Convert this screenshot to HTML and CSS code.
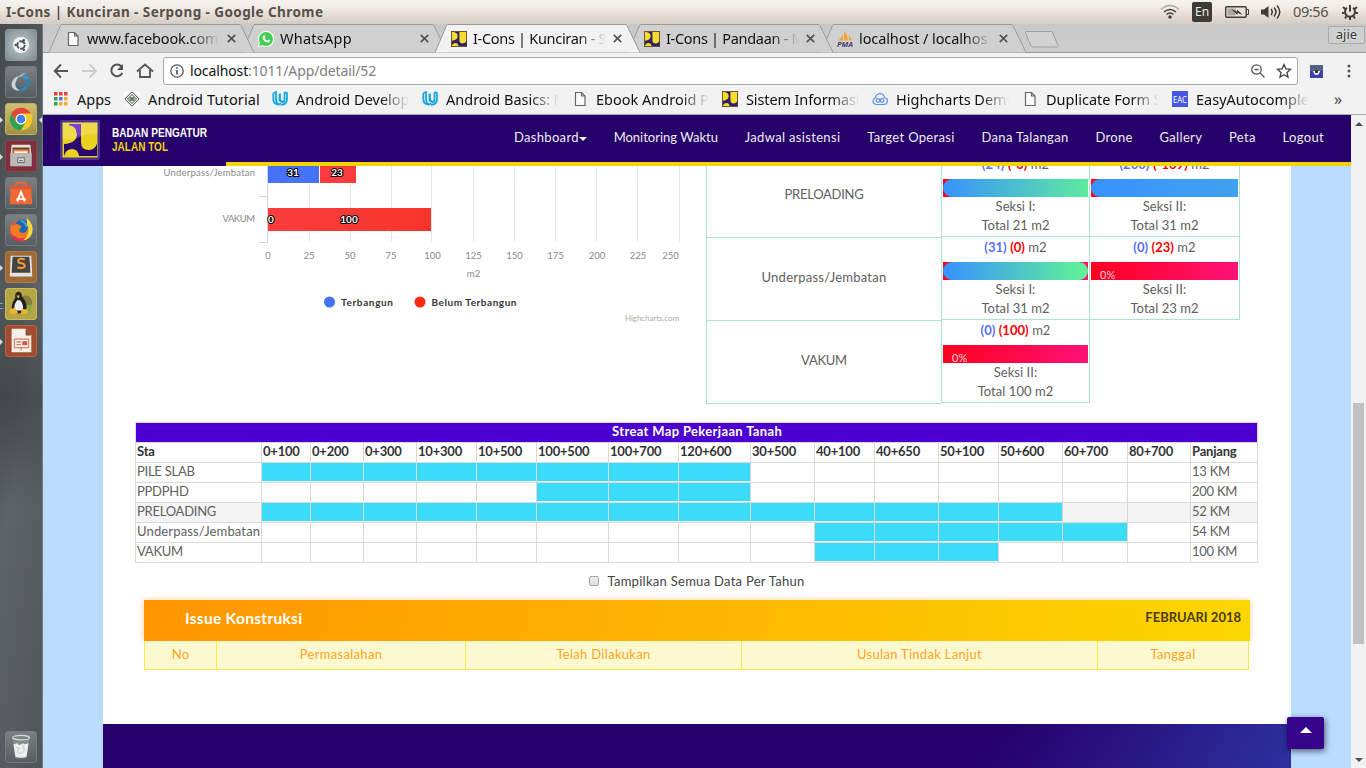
FILE: index.html
```html
<!DOCTYPE html>
<html lang="id">
<head>
<meta charset="utf-8">
<title>I-Cons | Kunciran - Serpong</title>
<link rel="stylesheet" href="styles.css">
</head>
<body>
<svg width="0" height="0" class="defs">
  <defs>
    <symbol id="tab" viewBox="0 0 207 29"><path d="M1 28.5 12.5 1.5Q13 .5 14 .5H191Q192.500 .5 193 1.500L206 28.500"/></symbol>
    <symbol id="pu" viewBox="2 2 36 36"><path d="M2 2h36v36H2z" fill="#5a4a30"/><path d="M4 4h32v32H4z" fill="#f8dc2c"/><path d="M9 4H21V22q0 8 7.500 8 6 0 8.500-6V36H19q-1-7-7-7t-8 7V24q13-1 13-10 0-8-8-9z" fill="#30206c"/></symbol>
    <symbol id="file" viewBox="0 0 16 16"><path d="M3.500 1.500h6l3.500 3.500v9.500H3.500zM9.500 1.500V5H13" fill="#fafafa" stroke="#666" stroke-width="1.200"/></symbol>
    <symbol id="close" viewBox="0 0 8 8"><path d="M.7.7 7.300 7.300M7.300.7.7 7.300" stroke="#555" stroke-width="1.500"/></symbol>
    <symbol id="udacity" viewBox="0 0 16 16"><path d="M1.300 2.200 4 1v7q0 4 3 5.500M1.300 2.200V8q0 5.500 5.700 5.500 1.500 0 1.500-1.500M8 2.500v5q0 3 2.500 3M12.500 1.200 15 2.200V8q0 5.500-6 5.800M12.500 1.200V9q0 2-2 2Q7 11 7.500 7V3" fill="none" stroke="#19a7e0" stroke-width="1.800"/></symbol>
  </defs>
</svg>
<header class="panel">
  <span class="panel-title">I-Cons | Kunciran - Serpong - Google Chrome</span>
  <svg class="panel-wifi" width="20" height="16" viewBox="0 0 20 16" fill="none" stroke="#3f3c38" stroke-width="1.500"><path d="M1 5.500q9-8 18 0" stroke="#aaa6a0"/><path d="M4 8q6-5 12 0M6.500 10.500q3.500-3 7 0"/><circle cx="10" cy="13" r="1" fill="#3f3c38"/></svg>
  <span class="panel-lang">En</span>
  <svg class="panel-bat" width="24" height="12" viewBox="0 0 24 12"><rect x=".7" y=".7" width="20.500" height="10.500" rx="1" fill="#e8e2da" stroke="#3f3c38" stroke-width="1.400"/><path d="M21.500 3.500h2v5h-2" fill="none" stroke="#3f3c38"/><path d="M2.500 2.500h8v7h-8z" fill="#aaa6a0"/><path d="M6 3l6 2.500V3.500L18 9l-5.500-2v2z" fill="#3f3c38"/></svg>
  <svg class="panel-vol" width="20" height="16" viewBox="0 0 20 16"><path d="M0 5.500h3L7.500 2v12L3 10.500H0z" fill="#3f3c38"/><path d="M10 5q2.500 3 0 6M13 3.500q4 4.500 0 9M16 1.500q5.500 6.500 0 13" fill="none" stroke="#3f3c38" stroke-width="1.500"/></svg>
  <span class="panel-clock">09:56</span>
  <svg width="16" height="16" viewBox="0 0 16 16" fill="none" stroke="#3f3c38"><path d="M5 3.800a5 5 0 1 0 6 0" stroke-width="2"/><path d="M8 1v6.500" stroke-width="2"/><path d="M1 3l2.300 2M15 3l-2.300 2M0 9h2.500M13.500 9H16M3 14.500l1.500-2.200M13 14.500l-1.500-2.200M8 13v3" stroke-width="2"/></svg>
</header>
<div class="desktop">
  <aside class="launcher">
    <div class="apps">
      <div class="app dash"><svg viewBox="0 0 32 32"><circle cx="16" cy="16" r="8.500" fill="#f4f5f5"/><circle cx="16" cy="16" r="4" fill="none" stroke="#4b4f53" stroke-width="2" stroke-dasharray="7 1.300"/><g fill="#4b4f53"><circle cx="10.300" cy="16" r="1.300"/><circle cx="19" cy="11" r="1.300"/><circle cx="19" cy="21" r="1.300"/></g></svg></div>
      <div class="app"><svg viewBox="0 0 32 32"><path d="M14 9Q5 13 6 20q2 6 9 5-6-3-5-8 1-4 4-8z" fill="#cdd4d6"/><path d="M12 12q3-6 10-6-4 2-4 4-4 0-6 2z" fill="#9fb3bc"/><path d="M16 10q8-3 9 3-3-1-4 1-2-3-5-4z" fill="#3c95c6"/><path d="M21 13q6 1 4 8-1-2-4-2 1-3 0-6z" fill="#2684b8"/><path d="M23 19q0 7-8 7 2-2 1-4 5 0 7-3z" fill="#2b8cc4"/><path d="M11 17q1 6 8 4-2 3-5 2.500-4-1-3-6.500z" fill="#2f6f97"/></svg></div>
      <div class="app chrome open focus"><svg viewBox="0 0 32 32"><circle cx="16" cy="16" r="12" fill="#f7c928"/><path d="M5.600 10A12 12 0 0 1 26.400 10H16a6 6 0 0 0-5.200 9z" fill="#e5443a"/><path d="M5.600 10A12 12 0 0 0 16 28l5.200-9a6 6 0 0 1-10.400 0z" fill="#2fa355"/><circle cx="16" cy="16" r="5.700" fill="#fff"/><circle cx="16" cy="16" r="4.600" fill="#4284ee"/></svg></div>
      <div class="app files open"><svg viewBox="0 0 32 32"><path d="M6 4h20l1 10H5z" fill="#e8e1d6"/><path d="M7 7h18v7H7z" fill="#5c4030"/><path d="M8 9h16v5H8z" fill="#f4843c"/><path d="M9 11h14v2H9z" fill="#fff0df"/><rect x="4.500" y="13" width="23" height="14" rx="1" fill="#b9bab8"/><rect x="12.500" y="18" width="7" height="5" fill="#ddd" stroke="#666"/><path d="M14 21h4" stroke="#555"/></svg></div>
      <div class="app"><svg viewBox="0 0 32 32"><path d="M11 9V5h10v4" fill="none" stroke="#e86b3b" stroke-width="2"/><path d="M4 8h24v5H4z" fill="#d95a33"/><path d="M5 12h22l1 16H4z" fill="#ed6a38"/><path d="M12 25l4-10 4 10M11 22.500h10" fill="none" stroke="#fff" stroke-width="2"/></svg></div>
      <div class="app"><svg viewBox="0 0 32 32"><circle cx="16" cy="16.500" r="11.500" fill="#f0582a"/><path d="M5 20q2 8 11 8 8 0 11-8-5 5-11 4-7 0-11-4z" fill="#e52f52"/><circle cx="17" cy="13" r="8" fill="#1b67b5"/><path d="M5 10q1 2 4 1 3-3 5 0l3 1-3 4q1 4 5 3 4-1 4-6 4 6-1 10-6 4-12 0Q3 19 5 10z" fill="#f57a26"/><path d="M22 3q8 7 6 16-3 8-10 8 6-4 6-11 0-4-2-6 1-4 0-7z" fill="#fddb3f"/><path d="M16 6q5 2 6 7" stroke="#36a6e8" stroke-width="2" fill="none"/></svg></div>
      <div class="app sublime open"><svg viewBox="0 0 32 32"><path d="M5 4h22l1 22H4z" fill="#e3e3e1"/><path d="M7 5h18l1 17H6z" fill="#444543"/><path d="M20 8q-7-2-7 1.500 0 2 3.500 2.500t3.500 3q0 3-8 1.500" stroke="#f7983c" stroke-width="2.200" fill="none"/></svg></div>
      <div class="app tux open"><svg viewBox="0 0 32 32"><circle cx="21" cy="14" r="7" fill="#85803c"/><path d="M22 17h6l-2 10h-3z" fill="#8eae44"/><path d="M13 3q4 0 4 5 5 5 5 12-3 6-9 6-7 0-7-7 1-6 4-10-1-5 3-6z" fill="#222"/><path d="M12 12q-4 5-3 11h9q1-7-3-11z" fill="#eee"/><path d="M11 7h4l-2 3z" fill="#f3b52c"/><path d="M4 22l5-2 4 5-4 2-5-1zM17 21l5 1 2 3-6 2-2-2z" fill="#f3b52c"/></svg></div>
      <div class="app impress open"><svg viewBox="0 0 32 32"><path d="M6 3h15l6 7v18H6z" fill="#f5efea"/><path d="M21 3v7h6z" fill="#8d4a31"/><rect x="9" y="14" width="15" height="9" fill="#fff" stroke="#de8670" stroke-width="1.500"/><path d="M11 17h5M11 20h5M18 17h4v3h-4z" stroke="#ce5738" stroke-width="1.300" fill="#ce5738"/><path d="M16 23v3" stroke="#ce5738"/></svg></div>
    </div>
    <div class="app"><svg viewBox="0 0 32 32"><path d="M7 6h18l-3 22H10z" fill="#858a8a"/><path d="M8 13l4-1 2 2 4-2 2 1 4-1-2 14q-6 3-12 0z" fill="#eeeeeb"/><path d="M11 16l3 2-2 3 4 2 4-4-2-3M17 14l3 2" stroke="#bfc0be" fill="none"/><ellipse cx="16" cy="6" rx="9" ry="2.300" fill="#7d8282" stroke="#d9dcda" stroke-width="1.300"/></svg></div>
  </aside>

  <main class="window">
    <div class="tabs">
      <div class="tab t1"><svg class="shape"><use href="#tab"/></svg><svg class="fav"><use href="#file"/></svg><span>www.facebook.com</span><svg class="x"><use href="#close"/></svg></div>
      <div class="tab t2"><svg class="shape"><use href="#tab"/></svg><svg class="fav" viewBox="0 0 16 16"><path d="M0 16l1-4.500A8 8 0 1 1 4.500 15z" fill="#fff"/><circle cx="8" cy="8" r="7" fill="#40cf50"/><path d="M1 15l1.200-4 3 3z" fill="#40cf50"/><path d="M5 4.500l1.500-.5 1 2-.8 1q1 2 2.600 2.500l1-1 1.700 1q0 2-2 2Q5 11 4.500 6z" fill="#fff"/></svg><span>WhatsApp</span><svg class="x"><use href="#close"/></svg></div>
      <div class="tab t3"><svg class="shape"><use href="#tab"/></svg><svg class="fav"><use href="#pu"/></svg><span>I-Cons | Kunciran - Se</span><svg class="x"><use href="#close"/></svg></div>
      <div class="tab t4"><svg class="shape"><use href="#tab"/></svg><svg class="fav"><use href="#pu"/></svg><span>I-Cons | Pandaan - M</span><svg class="x"><use href="#close"/></svg></div>
      <div class="tab t5"><svg class="shape"><use href="#tab"/></svg><svg class="fav" viewBox="0 0 16 16"><path d="M1 9.500Q5 7 6 2v7.500zM7 9.500V0q4 4 4 9.500zM12 9.500V4q2 2 3 5.500z" fill="#f8a43a"/><text x="0" y="15.500" class="pma" textLength="16" lengthAdjust="spacingAndGlyphs">PMA</text></svg><span>localhost / localhos</span><svg class="x"><use href="#close"/></svg></div>
      <svg class="newtab" width="36" height="19" viewBox="0 0 36 19"><path d="M2 1.500h26l6 14q0 1.500-1 1.500H9q-1.500 0-2-1L1.500 3z" fill="#d3d3d3" stroke="#a0a0a0"/></svg>
      <span class="user">ajie</span>
    </div>
    <div class="toolbar">
      <svg class="nav-ico" width="110" height="28" viewBox="0 0 110 28" fill="none" stroke-width="1.900"><path d="M15 14H2.500M8 7.500 1.700 14 8 20.500" stroke="#555"/><path d="M29 14h13M36.500 7.500 43 14l-6.500 6.500" stroke="#ccc"/><path d="M68.500 9.500A5.800 5.800 0 1 0 69.300 16" stroke="#555" stroke-width="2"/><path d="M70 7v6h-6z" fill="#555"/><path d="M84 14.500l8-7 8 7M87 13v7h10v-7" stroke="#555" stroke-width="1.800"/></svg>
      <div class="url"><svg width="14" height="14" viewBox="0 0 14 14" fill="none" stroke="#555"><circle cx="7" cy="7" r="6.200" stroke-width="1.300"/><path d="M7 6v4.500M7 3.200v1.600" stroke-width="1.700"/></svg><span class="addr"><b>localhost</b>:1011/App/detail/52</span>
        <svg class="lens" width="14" height="14" viewBox="0 0 14 14" fill="none" stroke="#555" stroke-width="1.300"><circle cx="5.500" cy="5.500" r="4.700"/><path d="M9 9l4.500 4.500M3.500 5.500h4"/></svg>
        <svg class="star" width="16" height="16" viewBox="0 0 16 16" fill="none" stroke="#444" stroke-width="1.300"><path d="M8 1.500l1.900 4.300 4.600.5-3.500 3.100 1 4.700L8 11.700l-4 2.400 1-4.700L1.500 6.300l4.600-.5z"/></svg></div>
      <svg class="ext" width="13" height="13" viewBox="0 0 13 13"><path d="M0 0h13v13H0z" fill="#3f3fb1"/><path d="M0 0h13v6H0z" fill="#4f6384"/><path d="M3 6h7q-1 4-3.500 4T3 6z" fill="#fff"/><circle cx="6.500" cy="6.800" r="1.500" fill="#222"/></svg>
      <svg width="4" height="14" viewBox="0 0 4 14" fill="#555"><circle cx="2" cy="2" r="1.500"/><circle cx="2" cy="7" r="1.500"/><circle cx="2" cy="12" r="1.500"/></svg>
    </div>
    <div class="bookmarks">
      <div class="bm apps-bm"><svg viewBox="0 0 16 16"><g fill="#e8413a"><path d="M0 1h3.500v3.500H0zM5 1h3.500v3.500H5zM10 1h3.500v3.500H10z"/></g><path d="M0 6h3.500v3.500H0zM0 11h3.500v3.500H0z" fill="#2ba058"/><path d="M5 6h3.500v3.500H5z" fill="#4177ee"/><path d="M10 6h3.500v3.500H10zM5 11h3.500v3.500H5zM10 11h3.500v3.500H10z" fill="#efad36"/></svg><span>Apps</span></div>
      <div class="bm tut-bm"><svg viewBox="0 0 16 16"><path d="M0 0h16v16H0z" fill="#f8f8f8"/><path d="M8 .8 15.200 8 8 15.200.8 8zM8 3.500 12.500 8 8 12.500 3.500 8z" fill="none" stroke="#454b46"/><path d="M5.500 6h5v4h-5z" fill="#63896d"/></svg><span>Android Tutorial</span></div>
      <div class="bm"><svg><use href="#udacity"/></svg><span>Android Develop</span></div>
      <div class="bm"><svg><use href="#udacity"/></svg><span>Android Basics: M</span></div>
      <div class="bm"><svg><use href="#file"/></svg><span>Ebook Android P</span></div>
      <div class="bm"><svg><use href="#pu"/></svg><span class="tight">Sistem Informasi</span></div>
      <div class="bm"><svg viewBox="0 0 16 16" fill="none" stroke="#5790e8" stroke-width="1.200"><path d="M4 13.500a3.500 3.500 0 0 1-.5-6.800Q4 3 8 2.500q3.500 0 4.500 4Q15.500 7 15.400 10t-3.400 3.500z"/><circle cx="6" cy="9.500" r="1.800"/><circle cx="10" cy="9.500" r="1.800"/></svg><span>Highcharts Demo</span></div>
      <div class="bm"><svg><use href="#file"/></svg><span>Duplicate Form S</span></div>
      <div class="bm"><svg viewBox="0 0 16 16"><path d="M0 0h16v16H0z" fill="#4657e6"/><text x="1" y="12" class="eac" textLength="14" lengthAdjust="spacingAndGlyphs">EAC</text></svg><span>EasyAutocomple</span></div>
      <span class="more">»</span>
    </div>

    <div class="viewport">
      <div class="page">
        <nav class="site-nav">
          <div class="brand">
            <svg width="40" height="40" viewBox="0 0 40 40"><rect x=".7" y=".7" width="38.600" height="38.600" rx="2" fill="#4a2c8e" stroke="#4e3592" stroke-width="1.500"/><path d="M2.500 2.500h35v35h-35z" fill="#e9d21e"/><path d="M9 4H21V22q0 8 7.500 8 6 0 8.500-6V36H19q-1-7-7-7t-8 7V24q13-1 13-10 0-8-8-9z" fill="#2a0870"/><path d="M9 4H21V16l-4-1q0-9-8-10z" fill="#5b10c9"/><path d="M2.500 2.500h35v12q-12-1-19 3-8 3-16 1z" fill="#fff" opacity=".2"/></svg>
            <svg class="brand-text" width="98" height="30" viewBox="0 0 98 30"><text x="0" y="12" fill="#fff" textLength="95" lengthAdjust="spacingAndGlyphs">BADAN PENGATUR</text><text x="0" y="26" fill="#f2d70d" textLength="56" lengthAdjust="spacingAndGlyphs">JALAN TOL</text></svg>
          </div>
          <div class="menu"><a>Dashboard<i></i></a><a class="long">Monitoring Waktu</a><a>Jadwal asistensi</a><a>Target Operasi</a><a>Dana Talangan</a><a>Drone</a><a>Gallery</a><a>Peta</a><a>Logout</a></div>
        </nav>
        <div class="content">
          <div class="sheet">
            <div class="top">
              <svg class="chart" width="603" height="258" viewBox="103 166 603 258">
                <defs><linearGradient id="red"><stop stop-color="#f93d3d"/><stop offset="1" stop-color="#f7352b"/></linearGradient></defs>
                <path d="M309.500 166v76M350.500 166v76M391.500 166v76M431.500 166v76M473.500 166v76M514.500 166v76M555.500 166v76M596.500 166v76M637.500 166v76M679.500 166v76" stroke="#e6e6e6"/>
                <path d="M267.500 166v77M259 196.500h9M259 242.500h9" stroke="#ccd6eb" fill="none"/>
                <path d="M268 166h51v17h-51z" fill="#4572f7"/><path d="M320 166h36v17h-36z" fill="#f93d3d"/><rect x="268" y="208" width="163" height="23" fill="url(#red)"/>
                <g class="axis"><text x="163.500" y="176" textLength="91.500">Underpass/Jembatan</text><text x="222.500" y="222" textLength="32.500">VAKUM</text>
                <g class="mid"><text x="268" y="259">0</text><text x="309" y="259">25</text><text x="350" y="259">50</text><text x="391" y="259">75</text><text x="432.500" y="259">100</text><text x="473.500" y="259">125</text><text x="514.500" y="259">150</text><text x="555.500" y="259">175</text><text x="597" y="259">200</text><text x="638" y="259">225</text><text x="670.500" y="259">250</text><text x="473.500" y="277">m2</text></g></g>
                <g class="val"><text x="293" y="176">31</text><text x="337" y="176">23</text><text x="271" y="223">0</text><text x="349" y="223">100</text></g>
                <circle cx="329.500" cy="302" r="5.500" fill="#4572f7"/><circle cx="420" cy="302" r="5.500" fill="#fa2a12"/>
                <g class="leg"><text x="341" y="306" textLength="52">Terbangun</text><text x="431.500" y="306" textLength="85">Belum Terbangun</text></g>
                <text class="credit" x="625" y="321" textLength="54">Highcharts.com</text>
              </svg>
              <div class="works">
                <div class="names"><div class="up-case">PRELOADING</div><div>Underpass/Jembatan</div><div class="up-case">VAKUM</div></div>
                <div class="sections">
                  <div class="sec"><p><b>(24)</b> <em>(-3)</em> m2</p><div class="bar part"></div><p>Seksi I:</p><p>Total 21 m2</p></div>
                  <div class="sec"><p><b>(200)</b> <em>(-169)</em> m2</p><div class="bar over"></div><p>Seksi II:</p><p>Total 31 m2</p></div>
                  <div class="sec"><p><b>(31)</b> <em>(0)</em> m2</p><div class="bar full"></div><p>Seksi I:</p><p>Total 31 m2</p></div>
                  <div class="sec"><p><b>(0)</b> <em>(23)</em> m2</p><div class="bar">0%</div><p>Seksi II:</p><p>Total 23 m2</p></div>
                  <div class="sec"><p><b>(0)</b> <em>(100)</em> m2</p><div class="bar">0%</div><p>Seksi II:</p><p>Total 100 m2</p></div>
                </div>
              </div>
            </div>
            <table class="street">
              <colgroup><col class="w126"><col class="w49"><col class="w53"><col class="w53"><col class="w60"><col class="w60"><col class="w72"><col class="w70"><col class="w72"><col class="w64"><col class="w60"><col class="w64"><col class="w60"><col class="w64"><col class="w65"><col class="w63"><col class="w67"></colgroup>
              <tr class="cap"><th colspan="17">Streat Map Pekerjaan Tanah</th></tr>
              <tr><th>Sta</th><th>0+100</th><th>0+200</th><th>0+300</th><th>10+300</th><th>10+500</th><th>100+500</th><th>100+700</th><th>120+600</th><th>30+500</th><th>40+100</th><th>40+650</th><th>50+100</th><th>50+600</th><th>60+700</th><th>80+700</th><th>Panjang</th></tr>
              <tr><td>PILE SLAB</td><td class="on"></td><td class="on"></td><td class="on"></td><td class="on"></td><td class="on"></td><td class="on"></td><td class="on"></td><td class="on"></td><td></td><td></td><td></td><td></td><td></td><td></td><td></td><td>13 KM</td></tr>
              <tr><td>PPDPHD</td><td></td><td></td><td></td><td></td><td></td><td class="on"></td><td class="on"></td><td class="on"></td><td></td><td></td><td></td><td></td><td></td><td></td><td></td><td>200 KM</td></tr>
              <tr class="hover"><td>PRELOADING</td><td class="on"></td><td class="on"></td><td class="on"></td><td class="on"></td><td class="on"></td><td class="on"></td><td class="on"></td><td class="on"></td><td class="on"></td><td class="on"></td><td class="on"></td><td class="on"></td><td class="on"></td><td></td><td></td><td>52 KM</td></tr>
              <tr><td class="mixed">Underpass/Jembatan</td><td></td><td></td><td></td><td></td><td></td><td></td><td></td><td></td><td></td><td class="on"></td><td class="on"></td><td class="on"></td><td class="on"></td><td class="on"></td><td></td><td>54 KM</td></tr>
              <tr><td>VAKUM</td><td></td><td></td><td></td><td></td><td></td><td></td><td></td><td></td><td></td><td class="on"></td><td class="on"></td><td class="on"></td><td></td><td></td><td></td><td>100 KM</td></tr>
            </table>
            <label class="all"><span class="check"></span>Tampilkan Semua Data Per Tahun</label>
            <section class="issue">
              <header><h2>Issue Konstruksi</h2><strong>FEBRUARI 2018</strong></header>
              <div class="issue-cols"><span>No</span><span>Permasalahan</span><span>Telah Dilakukan</span><span>Usulan Tindak Lanjut</span><span>Tanggal</span></div>
            </section>
            <footer></footer>
          </div>
          <div class="totop"></div>
        </div>
      </div>
      <div class="scroll"><i class="up"></i><div class="thumb"></div><i class="down"></i></div>
    </div>
  </main>
</div>
</body>
</html>
```
FILE: styles.css
```css
* { box-sizing: border-box; }
body { margin: 0; width: 1366px; height: 768px; overflow: hidden; font-family: "Noto Sans", sans-serif; display: flex; flex-direction: column; }
svg { display: block; flex: none; }
.defs { position: absolute; }
.panel { height: 24px; flex: none; display: flex; align-items: center; padding: 0 8px 0 6px; background: linear-gradient(#f6f3ef, #efeae4 35%, #d6cbc0); color: #56504a; }
.panel-title { font-weight: 700; font-size: 13.500px; letter-spacing: .43px; margin-right: auto; }
.panel-wifi { margin-right: 12px; }
.panel-lang { background: #3c3b37; color: #f0ece6; font-size: 12px; width: 20px; height: 20px; line-height: 20px; text-align: center; border-radius: 2px; margin-right: 13px; }
.panel-bat { margin-right: 12px; }
.panel-vol { margin-right: 12px; }
.panel-clock { font-size: 14.500px; width: 37px; letter-spacing: -.4px; margin-right: 12px; white-space: nowrap; padding-bottom: 2px; }

.desktop { flex: 1; display: flex; min-height: 0; }
.launcher { width: 43px; display: flex; flex-direction: column; justify-content: space-between; align-items: center; padding: 5px 2px 5px 1px; border-right: 1px solid #777a7c; background: radial-gradient(circle at 10% 50%, #424849, transparent 30%), linear-gradient(100deg, #454b4d, #5d6467 55%, #4f5558); }
.apps { display: flex; flex-direction: column; gap: 5px; }
.app { width: 32px; height: 32px; border-radius: 3px; background: linear-gradient(#7a8083, #575e61); border: 1px solid #747a7d; position: relative; }
.app svg { width: 30px; height: 30px; }
.dash { background: radial-gradient(#c3cccf, #7e8a8f); border-color: #8e999d; }
.chrome { background: linear-gradient(#cfbf72, #a39143); border-color: #bfae5c; }
.files { background: #80303d; border-color: #8e4550; }
.sublime { background: #a06a35; border-color: #b67b42; }
.tux { background: #b5a545; border-color: #cabc5e; }
.impress { background: #a04c2d; border-color: #b86444; }
.open::before { content: ""; position: absolute; left: -6px; top: 13px; border: 3px solid transparent; border-left-color: #d5dadb; border-right: 0; }
.tux.open::before { top: 14px; width: 3px; height: 4px; border: solid #5cb6dc; border-width: 1px 0; }
.focus::after { content: ""; position: absolute; right: -6px; top: 13px; border: 3px solid transparent; border-right-color: #e3e6e6; border-left: 0; }

.window { flex: 1; min-width: 0; display: flex; flex-direction: column; background: #f2f2f2; }
.tabs { height: 29px; flex: none; display: flex; padding-left: 5px; background: linear-gradient(#c8c8c8, #cdcdcd); border-bottom: 1px solid #9b9b9b; }
.tab { width: 207px; height: 29px; margin-right: -14px; position: relative; display: flex; align-items: center; padding-left: 17px; flex: none; }
.shape { position: absolute; left: 0; top: 0; width: 207px; height: 29px; fill: #d0d0d0; stroke: #999; }
.t1 { z-index: 5; } .t2 { z-index: 4; } .t3 { z-index: 6; } .t4 { z-index: 3; } .t5 { z-index: 2; }
.t3 .shape { fill: #f2f2f2; }
.fav { width: 16px; height: 16px; position: relative; margin-right: 6px; }
.tab span { position: relative; width: 133px; padding-bottom: 1px; overflow: hidden; white-space: nowrap; font-size: 14.500px; line-height: 20px; color: #111; letter-spacing: -.1px; -webkit-mask-image: linear-gradient(90deg, #000 105px, transparent 133px); mask-image: linear-gradient(90deg, #000 105px, transparent 133px); }
.t2 span { letter-spacing: .25px; }
.t3 span, .t4 span { letter-spacing: -.3px; }
.x { width: 9px; height: 9px; position: relative; margin-left: 7px; }
.pma { font: italic bold 7px "Noto Sans", sans-serif; fill: #4b3d75; }
.newtab { margin: 6px 0 0 11px; }
.user { margin: 2px 1px 0 auto; width: 37px; height: 18px; border: 1px solid #aaa; border-radius: 2px; font-size: 13px; line-height: 15px; text-align: center; color: #333; background: #cfcfcf; text-shadow: 0 0 2px #fff; }
.toolbar { height: 36px; flex: none; display: flex; align-items: center; padding: 0 15px 0 10px; }
.url { flex: 1; height: 28px; background: #fff; border: 1px solid #a8a8a8; border-radius: 3px; display: flex; align-items: center; padding: 0 5px 0 6px; gap: 6px; }
.addr { flex: 1; font-size: 14px; color: #808080; letter-spacing: -.12px; padding-bottom: 1px; }
.addr b { font-weight: 400; color: #111; }
.star { margin: 0 0 0 5px; }
.ext { margin: 0 24px 0 12px; }
.bookmarks { height: 26px; flex: none; display: flex; align-items: center; padding: 0 0 5px 11px; border-bottom: 1px solid #aaa; }
.bm { width: 150px; display: flex; align-items: center; gap: 8px; flex: none; }
.bm svg { width: 16px; height: 16px; }
.bm span { width: 113px; overflow: hidden; white-space: nowrap; font-size: 14.500px; line-height: 20px; color: #111; -webkit-mask-image: linear-gradient(90deg, #000 85px, transparent 113px); mask-image: linear-gradient(90deg, #000 85px, transparent 113px); }
.bm .tight { letter-spacing: -.12px; }
.apps-bm { width: 70px; gap: 7px; }
.bm.apps-bm span { width: 40px; -webkit-mask-image: none; mask-image: none; }
.tut-bm { width: 148px; }
.bm.tut-bm span { width: 118px; letter-spacing: .12px; -webkit-mask-image: none; mask-image: none; }
.eac { font: 9px "Noto Sans", sans-serif; fill: #fff; }
.more { margin-left: 12px; font-size: 16px; line-height: 20px; color: #444; }

.viewport { flex: 1; display: flex; min-height: 0; font-family: Lato, sans-serif; }
.page { flex: 1; min-width: 0; display: flex; flex-direction: column; background: #bbdbff; }
.site-nav { height: 51px; flex: none; display: flex; background: #26006b; }
.brand { width: 183px; display: flex; align-items: center; padding: 0 0 1px 17px; gap: 12px; }
.brand-text { font: bold 13.500px "Liberation Sans", sans-serif; }
.menu { flex: 1; border-bottom: 4px solid #f2d500; display: flex; justify-content: flex-end; gap: 26.800px; align-items: center; padding: 0 27px 3px 0; color: #eee; font-size: 13px; letter-spacing: .33px; }
.menu a { white-space: nowrap; }
.menu .long { letter-spacing: 0; }
.menu i { display: inline-block; border: 4px solid transparent; border-top-color: #fff; border-bottom: 0; vertical-align: 1px; }
.content { flex: 1; min-height: 0; padding: 0 60px; position: relative; overflow: hidden; }
.sheet { height: 602px; background: #fff; display: flex; flex-direction: column; color: #606060; font-size: 13px; overflow: hidden; }
.top { height: 256px; flex: none; display: flex; }
.axis { font: 9.500px Lato, sans-serif; fill: #888; }
.mid, .val { text-anchor: middle; }
.val { font: bold 10px Lato, sans-serif; fill: #fff; stroke: #000; stroke-width: 2px; paint-order: stroke; }
.leg { font: bold 10px Lato, sans-serif; fill: #333; }
.credit { font: 8px Lato, sans-serif; fill: #aaa; }
.works { display: flex; margin-top: -12px; }
.names { width: 235px; height: 250px; border-left: 1px solid #ace6cb; margin-top: 1px; }
.names div { height: 83px; border-bottom: 1px solid #ace6cb; text-align: center; line-height: 79px; letter-spacing: .25px; }
.names .up-case { letter-spacing: -.25px; }
.sections { width: 299px; display: grid; grid-template-columns: 149px 150px; grid-auto-rows: 83px; align-content: start; }
.sec { border: solid #ace6cb; border-width: 0 1px 1px 0; padding: 1px 1px 0; text-align: center; letter-spacing: .05px; }
.sec:nth-child(odd) { border-left-width: 1px; }
.sec p { margin: 0; height: 19px; line-height: 19px; }
.sec .bar + p, .sec .bar + p + p { line-height: 18px; }
.sec b { color: #5470ff; }
.sec em { color: #f00; font-weight: 700; font-style: normal; }
.bar { height: 18px; margin: 5px 0 0; background: linear-gradient(90deg, #ff001e, #ff1277); color: #ffd2dc; font-size: 11px; line-height: 26px; text-align: left; padding-left: 9px; overflow: hidden; }
.part, .over, .full { padding: 0; }
.part::before, .over::before, .full::before { content: ""; display: block; height: 18px; border-radius: 9px; background: linear-gradient(90deg, #3892ff, #60f495); }
.part::before { width: 110%; }
.over::before { width: 600%; }
.street { width: 1123px; margin-left: 32px; table-layout: fixed; border-spacing: 0; border: solid #d9d9d9; border-width: 1px 0 0 1px; flex: none; color: #606060; }
.street th, .street td { height: 20px; padding: 0 0 0 1px; border: solid #d9d9d9; border-width: 0 1px 1px 0; line-height: 17px; text-align: left; white-space: nowrap; vertical-align: top; }
.street th { color: #333; font-size: 13px; letter-spacing: -.2px; }
.street td { letter-spacing: -.25px; }
.street .mixed { letter-spacing: .15px; }
.street .cap th { background: #4b00d1; color: #fff; text-align: center; letter-spacing: .35px; }
.street .on { background: linear-gradient(#3bdbfa 18px, #f4f4f4 18px); }
.hover { background: #f4f4f4; }
.w126 { width: 126px; } .w49 { width: 49px; } .w53 { width: 53px; } .w60 { width: 60px; } .w63 { width: 63px; } .w64 { width: 64px; } .w65 { width: 65px; } .w67 { width: 67px; } .w70 { width: 70px; } .w72 { width: 72px; }
.all { height: 37px; padding-bottom: 2px; display: flex; align-items: center; justify-content: center; gap: 8px; color: #444; letter-spacing: .28px; }
.check { width: 10px; height: 10px; border: 1px solid #a8a8a8; border-radius: 2px; background: linear-gradient(#eee, #ddd); }
.issue { width: 1106px; margin-left: 41px; flex: none; }
.issue header { height: 41px; display: flex; justify-content: space-between; align-items: center; padding: 0 9px 5px 41px; background: linear-gradient(100deg, #ff9500, #fcd700); box-shadow: 0 0 6px #ffa54688; }
.issue h2 { margin: 0; font-size: 15.500px; color: #fff; letter-spacing: .3px; }
.issue strong { color: #4c3b10; font-size: 13px; padding-bottom: 2px; }
.issue-cols { position: relative; width: 1105px; height: 29px; display: grid; grid-template-columns: 72px 249px 276px 356px 151px; border-left: 1px solid #f8ea4a; background: #fcf9d0; text-align: center; line-height: 27px; color: #ffa41c; letter-spacing: .3px; }
.issue-cols span { border-right: 1px solid #f8ea4a; border-bottom: 1px solid #f8ea4a; }
footer { flex: none; height: 44px; margin-top: 54px; background: linear-gradient(120deg, #26006b 74%, #2c319f 100%); }
.totop { position: absolute; right: 27px; top: 551px; width: 37px; height: 32px; border-radius: 2px; background: #36058c; box-shadow: 1px 2px 6px #0009; }
.totop::before { content: ""; position: absolute; left: 13px; top: 10px; border: 6px solid transparent; border-bottom-color: #fff; border-top: 0; }
.scroll { width: 15px; background: #f1f1f1; display: flex; flex-direction: column; align-items: center; justify-content: space-between; padding: 7px 0 6px; }
.thumb { width: 11px; height: 241px; background: #c1c1c1; margin-top: 163px; }
.scroll i { border: 4px solid transparent; }
.up { border-bottom-color: #505050 !important; border-top: 0 !important; }
.down { border-top-color: #505050 !important; border-bottom: 0 !important; }
```
